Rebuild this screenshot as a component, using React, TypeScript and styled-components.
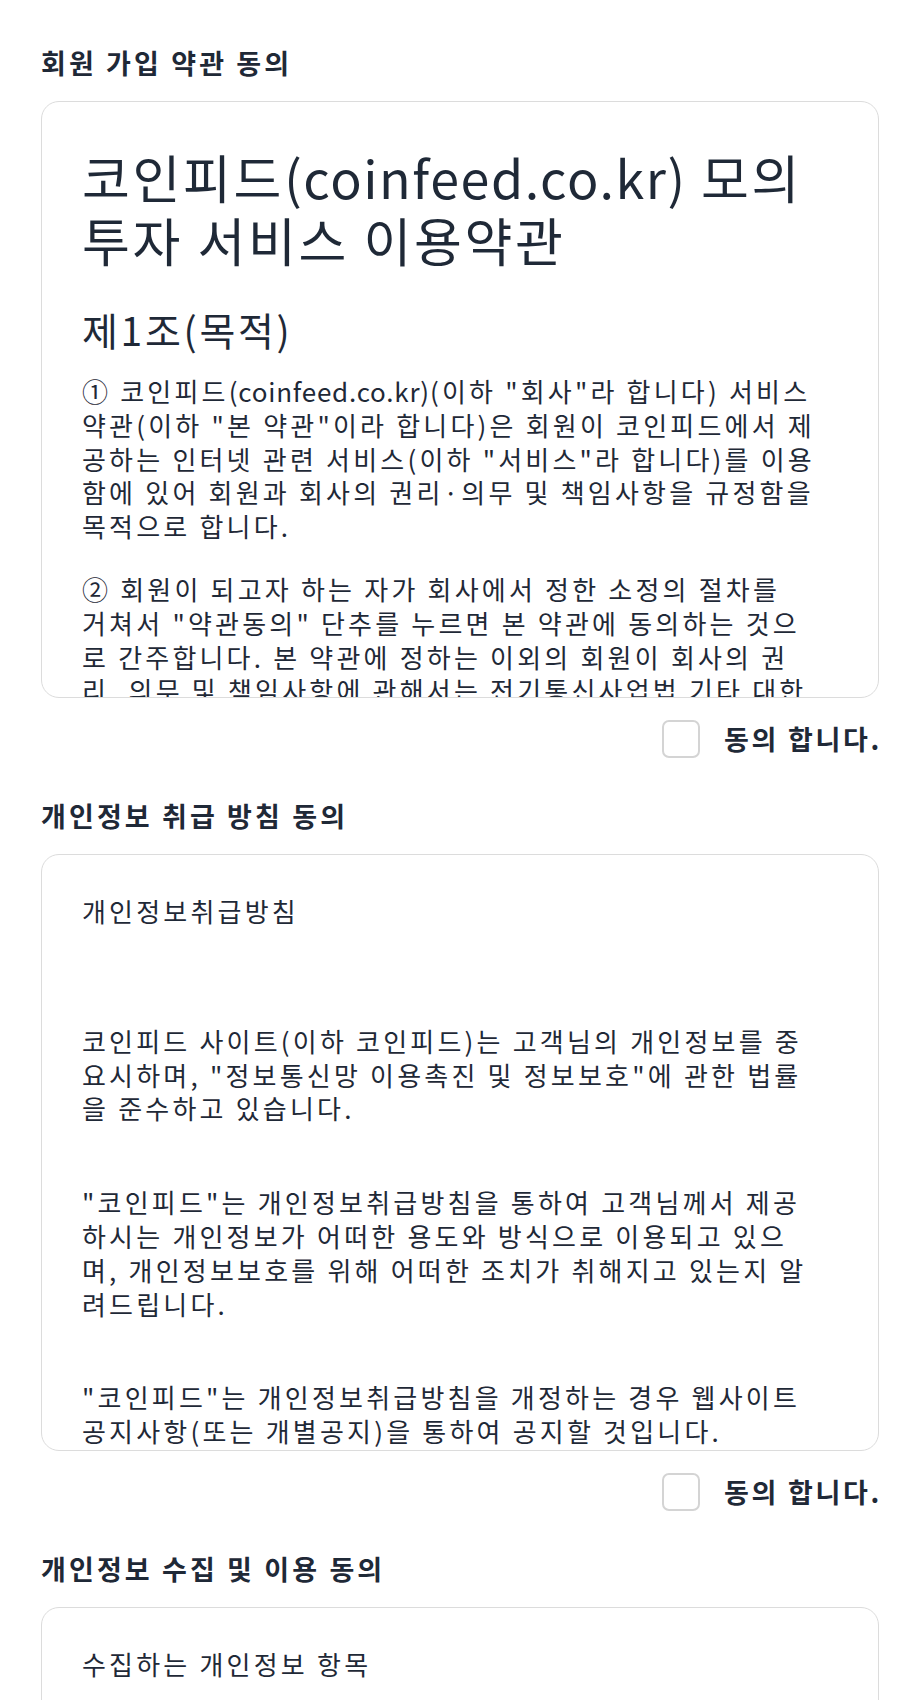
import React from 'react'
import styled, { createGlobalStyle } from 'styled-components'

const TEXT = '#1f2937'

const GlobalStyle = createGlobalStyle`
  body {
    margin: 0;
    background: #fff;
    color: ${TEXT};
    font-family: 'Noto Sans CJK KR', 'Noto Sans', sans-serif;
  }
`

const Page = styled.div`
  padding: 45px 41px 0;
`

const Section = styled.section`
  margin-bottom: 40px;
`

const Title = styled.h3`
  margin: 0 0 20px;
  font-size: 27px;
  line-height: 36px;
  font-weight: 700;
  letter-spacing: 3.1px;
`

const TermsBox = styled.div`
  box-sizing: border-box;
  height: 597px;
  border: 1px solid #dcdcdc;
  border-radius: 18px;
  padding: 0 40px;
  overflow-y: auto;
  scrollbar-width: none;

  &::-webkit-scrollbar {
    display: none;
  }
`

const DocTitle = styled.h1`
  margin: 43px 0 0;
  font-size: 52px;
  line-height: 63px;
  font-weight: 400;
  letter-spacing: 2.7px;
`

const Article = styled.h2`
  margin: 34px 0 0;
  font-size: 39px;
  line-height: 48px;
  font-weight: 400;
  letter-spacing: 2.7px;
`

const Para = styled.p<{ gap?: number }>`
  margin: ${props => props.gap ?? 0}px 0 0;
  font-size: 26px;
  line-height: 33.8px;
  letter-spacing: 3.2px;
  white-space: pre-line;
`

const Latin = styled.span`
  letter-spacing: 0.03em;
`

const AgreeRow = styled.label`
  display: flex;
  align-items: center;
  justify-content: flex-end;
  gap: 24px;
  margin-top: 22px;
  cursor: pointer;
`

const Check = styled.input`
  appearance: none;
  box-sizing: border-box;
  margin: 0;
  width: 38px;
  height: 38px;
  border: 2px solid #d4d4d4;
  border-radius: 7px;
  background: #fff;
  cursor: pointer;

  &:checked {
    background: ${TEXT};
    border-color: ${TEXT};
  }
`

const AgreeText = styled.span`
  font-size: 27px;
  line-height: 38px;
  font-weight: 700;
  letter-spacing: 2.7px;
  margin-right: -3px;
`

const Agree = () => (
  <AgreeRow>
    <Check type="checkbox" />
    <AgreeText>동의 합니다.</AgreeText>
  </AgreeRow>
)

const App = () => (
  <Page>
    <GlobalStyle />

    <Section>
      <Title>회원 가입 약관 동의</Title>
      <TermsBox>
        <DocTitle>
          코인피드<Latin>(coinfeed.co.kr)</Latin> 모의 투자 서비스 이용약관
        </DocTitle>
        <Article>제1조(목적)</Article>
        <Para gap={21}>
          ① 코인피드<Latin>(coinfeed.co.kr)</Latin>
          {`(이하 "회사"라 합니다) 서비스
약관(이하 "본 약관"이라 합니다)은 회원이 코인피드에서 제
공하는 인터넷 관련 서비스(이하 "서비스"라 합니다)를 이용
함에 있어 회원과 회사의 권리·의무 및 책임사항을 규정함을
목적으로 합니다.`}
        </Para>
        <Para gap={29}>
          {`② 회원이 되고자 하는 자가 회사에서 정한 소정의 절차를
거쳐서 "약관동의" 단추를 누르면 본 약관에 동의하는 것으
로 간주합니다. 본 약관에 정하는 이외의 회원이 회사의 권
리, 의무 및 책임사항에 관해서는 전기통신사업법 기타 대한
민국의 관련 법령과 상관습에 의합니다.`}
        </Para>
        <Article>제2조(정의)</Article>
        <Para gap={21}>
          ① "회원"이라 함은 회사와 서비스 이용계약을 체결하고 회사가 제공하는 서비스를
          이용하는 자를 말합니다.
        </Para>
      </TermsBox>
      <Agree />
    </Section>

    <Section>
      <Title>개인정보 취급 방침 동의</Title>
      <TermsBox>
        <Para gap={39}>개인정보취급방침</Para>
        <Para gap={96}>
          {`코인피드 사이트(이하 코인피드)는 고객님의 개인정보를 중
요시하며, "정보통신망 이용촉진 및 정보보호"에 관한 법률
을 준수하고 있습니다.`}
        </Para>
        <Para gap={60}>
          {`"코인피드"는 개인정보취급방침을 통하여 고객님께서 제공
하시는 개인정보가 어떠한 용도와 방식으로 이용되고 있으
며, 개인정보보호를 위해 어떠한 조치가 취해지고 있는지 알
려드립니다.`}
        </Para>
        <Para gap={60}>
          {`"코인피드"는 개인정보취급방침을 개정하는 경우 웹사이트
공지사항(또는 개별공지)을 통하여 공지할 것입니다.`}
        </Para>
        <Para gap={60}>○ 본 방침은 시행일부터 적용됩니다.</Para>
      </TermsBox>
      <Agree />
    </Section>

    <Section>
      <Title>개인정보 수집 및 이용 동의</Title>
      <TermsBox>
        <Para gap={39}>수집하는 개인정보 항목</Para>
        <Para gap={96}>
          회사는 회원가입, 상담, 서비스 신청 등을 위해 아래와 같은 개인정보를 수집하고
          있습니다.
        </Para>
      </TermsBox>
      <Agree />
    </Section>
  </Page>
)

export default App
